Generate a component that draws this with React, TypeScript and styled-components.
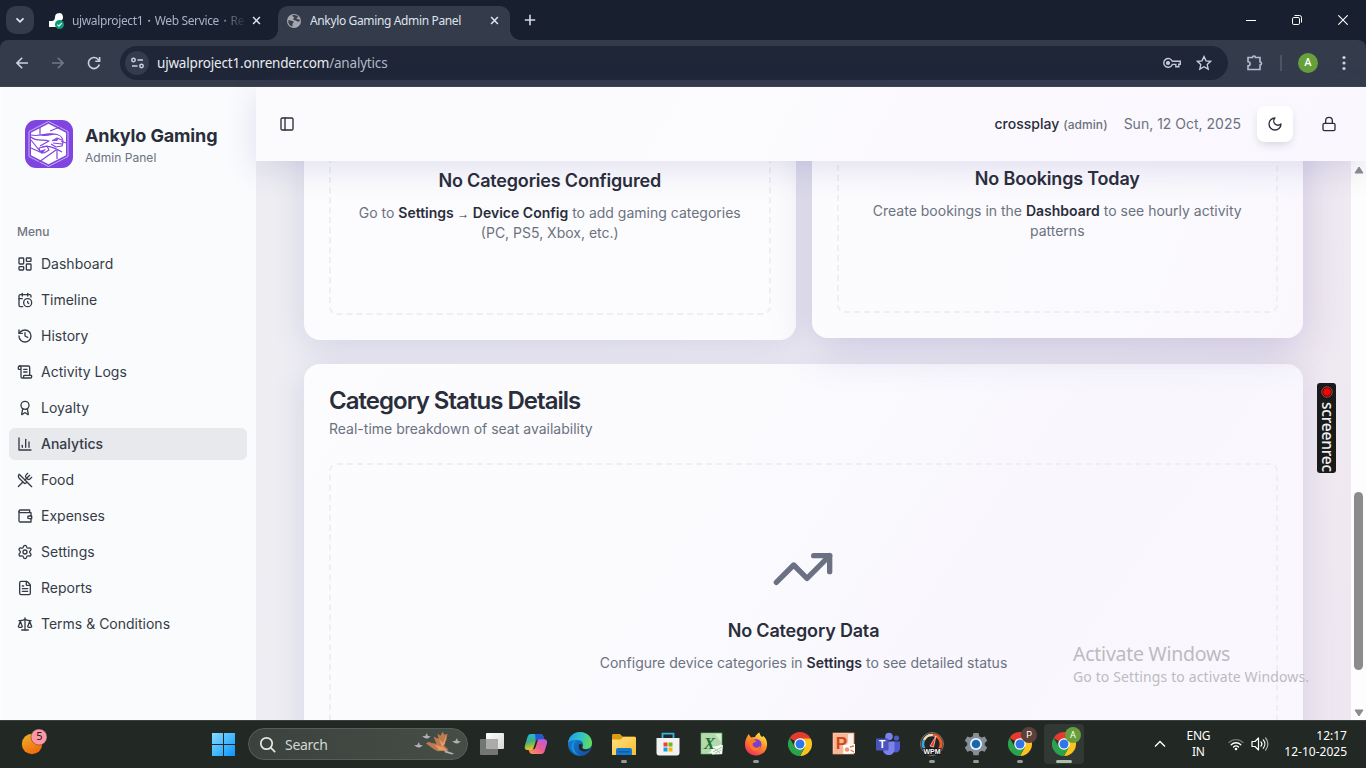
import React from 'react';
import styled, { createGlobalStyle, css } from 'styled-components';
import {
  Award,
  CalendarClock,
  FileText,
  History,
  LayoutDashboard,
  Lock,
  PanelLeft,
  Scale,
  ScrollText,
  Settings,
  TrendingUp,
  UtensilsCrossed,
} from 'lucide-react';

const ui = `'Inter', 'Liberation Sans', sans-serif`;
const system = `'Noto Sans', 'Open Sans', sans-serif`;

const GlobalStyle = createGlobalStyle`
  * { box-sizing: border-box; }
  body { margin: 0; overflow: hidden; background: #182030; }
  svg { display: block; flex: none; }
`;

const Screen = styled.div`
  position: relative;
  width: 1366px;
  height: 768px;
  display: flex;
  flex-direction: column;
  overflow: hidden;
  font-family: ${system};
`;

/* ---------- browser chrome ---------- */

const TabStrip = styled.div`
  height: 40px;
  flex: none;
  display: flex;
  align-items: flex-start;
  padding: 6px 0 0 6px;
  background: #182030;
  color: #d5d9e4;
`;

const TabSearch = styled.div`
  width: 28px;
  height: 28px;
  border-radius: 10px;
  background: #343b4b;
  display: flex;
  align-items: center;
  justify-content: center;
`;

const Tab = styled.div<{ $active?: boolean }>`
  position: relative;
  width: ${p => (p.$active ? 232 : 228)}px;
  height: 34px;
  margin-left: 8px;
  padding: 0 ${p => (p.$active ? 11 : 9)}px 5px ${p => (p.$active ? 8 : 6)}px;
  display: flex;
  align-items: center;
  gap: 8px;
  border-radius: 10px 10px 0 0;
  background: ${p => (p.$active ? '#343b4b' : 'transparent')};
  ${p =>
    p.$active &&
    css`
      &::before, &::after {
        content: '';
        position: absolute;
        bottom: 0;
        width: 10px;
        height: 10px;
      }
      &::before { left: -10px; background: radial-gradient(circle at 0 0, transparent 9.5px, #343b4b 10px); }
      &::after { right: -10px; background: radial-gradient(circle at 100% 0, transparent 9.5px, #343b4b 10px); }
    `}
`;

const TabTitle = styled.span<{ $fade?: boolean; $spacing: number }>`
  flex: 1;
  overflow: hidden;
  white-space: nowrap;
  font-size: 12px;
  line-height: 18px;
  letter-spacing: ${p => p.$spacing}px;
  color: ${p => (p.$fade ? '#aab1c3' : '#dfe3ec')};
  ${p => p.$fade && 'mask-image: linear-gradient(90deg, #000 84%, transparent 102%);'}
`;

const NewTab = styled.div`
  margin: 8px 0 0 14px;
`;

const WindowControls = styled.div`
  margin-left: auto;
  display: flex;
  height: 28px;
`;

const WindowButton = styled.div`
  width: 46px;
  display: flex;
  align-items: center;
  justify-content: center;
`;

const Toolbar = styled.div`
  height: 47px;
  flex: none;
  display: flex;
  align-items: center;
  background: #343b4b;
  border-radius: 8px 8px 0 0;
  border-bottom: 1px solid #3e4454;
  padding: 0 12px 1px 4px;
`;

const NavButton = styled.div`
  width: 36px;
  display: flex;
  justify-content: center;
`;

const Omnibox = styled.div`
  width: 1108px;
  height: 34px;
  margin-left: 8px;
  padding: 0 16px 0 5px;
  border-radius: 17px;
  background: #1e2637;
  display: flex;
  align-items: center;
`;

const SiteInfo = styled.div`
  width: 24px;
  height: 24px;
  border-radius: 50%;
  background: #343b4b;
  display: flex;
  align-items: center;
  justify-content: center;
`;

const Url = styled.div`
  flex: 1;
  margin-left: 8px;
  font-size: 13.5px;
  line-height: 20px;
  letter-spacing: -0.19px;
  color: #e8ebf2;
  span { color: #b2b8c6; }
`;

const OmniIcons = styled.div`
  display: flex;
  align-items: center;
  gap: 15px;
`;

const Extensions = styled.div`
  flex: 1;
  display: flex;
  align-items: center;
  padding-left: 18px;
`;

const Divider = styled.div`
  width: 2px;
  height: 16px;
  margin: 0 16px 0 16px;
  background: #4c5568;
`;

const Avatar = styled.div`
  width: 20px;
  height: 20px;
  border-radius: 50%;
  background: #67a03a;
  color: #fff;
  font: 500 11px/20px Roboto, ${system};
  text-align: center;
`;

const KebabSpace = styled.div`
  margin-left: 24px;
`;

/* ---------- application ---------- */

const Page = styled.div`
  flex: 1;
  min-height: 0;
  display: flex;
  background: #ededf3;
  font-family: ${ui};
  color: #2a2d3a;
`;

const Sidebar = styled.aside`
  width: 256px;
  flex: none;
  padding: 33px 9px 0;
  background: linear-gradient(90deg, #fdfdfe 0, #f9fbfd 2px);
`;

const Brand = styled.div`
  display: flex;
  align-items: center;
  gap: 12px;
  padding-left: 16px;
  height: 48px;
`;

const BrandText = styled.div`
  padding-top: 2px;
`;

const BrandName = styled.div`
  font-size: 18px;
  line-height: 24px;
  font-weight: 700;
  letter-spacing: -0.13px;
`;

const BrandSub = styled.div`
  font-size: 12px;
  line-height: 16px;
  margin-top: 2px;
  letter-spacing: 0.04px;
  color: #6b7280;
`;

const MenuLabel = styled.div`
  margin: 56px 0 8px 8px;
  font-size: 12px;
  font-weight: 500;
  line-height: 16px;
  color: #71757f;
`;

const Menu = styled.nav`
  display: flex;
  flex-direction: column;
  gap: 4px;
`;

const MenuItem = styled.div<{ $active?: boolean }>`
  height: 32px;
  padding: 0 8px;
  display: flex;
  align-items: center;
  gap: 8px;
  border-radius: 6px;
  font-size: 14px;
  line-height: 20px;
  color: #373b46;
  font-weight: ${p => (p.$active ? 500 : 400)};
  background: ${p => (p.$active ? '#e8e9ed' : 'transparent')};
`;

const Main = styled.main`
  flex: 1;
  min-width: 0;
  display: flex;
  flex-direction: column;
`;

const Header = styled.header`
  position: relative;
  z-index: 2;
  height: 74px;
  flex: none;
  display: flex;
  align-items: center;
  padding: 0 19px 0 23px;
  background: linear-gradient(120deg, #fbfbfe 0%, #fcfcfe 45%, #fbf8fe 60%, #faf8fe 100%);
  box-shadow: 0 8px 32px rgba(76, 66, 160, 0.15);
`;

const HeaderRight = styled.div`
  margin-left: auto;
  display: flex;
  align-items: center;
`;

const User = styled.div`
  font-size: 14px;
  line-height: 20px;
  font-weight: 500;
  span {
    margin-left: 4px;
    font-size: 12px;
    letter-spacing: 0.06px;
    color: #6b7280;
  }
`;

const Today = styled.div`
  margin: 0 16px;
  font-size: 14px;
  line-height: 20px;
  color: #6b7280;
`;

const IconButton = styled.div<{ $raised?: boolean }>`
  width: 36px;
  height: 36px;
  border-radius: 8px;
  display: flex;
  align-items: center;
  justify-content: center;
  ${p =>
    p.$raised &&
    css`
      margin-right: 18px;
      background: #fff;
      box-shadow: 0 4px 10px -2px rgba(30, 30, 60, 0.18);
    `}
`;

const Body = styled.div`
  flex: 1;
  min-height: 0;
  display: flex;
`;

const Viewport = styled.div`
  flex: 1;
  min-width: 0;
  padding: 0 48px;
  overflow: hidden;
  background: linear-gradient(115deg, #ededf2 0%, #efeef4 50%, #efe7f0 100%);
`;

const Content = styled.div`
  display: flex;
  flex-direction: column;
  gap: 24px;
  margin-top: -271px;
`;

const ChartRow = styled.div`
  display: grid;
  grid-template-columns: 1fr 1fr;
  gap: 16px;
`;

const Card = styled.section<{ $tall?: boolean; $lifted?: boolean }>`
  height: 450px;
  padding: 25px;
  display: flex;
  flex-direction: column;
  justify-content: ${p => (p.$tall ? 'flex-start' : 'flex-end')};
  border-radius: 16px;
  background: ${p =>
    p.$tall
      ? 'linear-gradient(125deg, #fcfcfe 0%, #fbfbfe 35%, #f9f7fd 62%, #faf8fe 100%)'
      : p.$lifted
        ? 'linear-gradient(110deg, #fcfcfe 10%, #faf8fd 100%)'
        : '#fcfcfe'};
  box-shadow: ${p => (p.$lifted ? '0 12px 40px rgba(76, 68, 160, 0.22)' : '0 8px 32px rgba(76, 68, 160, 0.15)')};
  ${p => p.$lifted && 'transform: translateY(-2px);'}
`;

const CardTitle = styled.h3`
  margin: 0;
  font-size: 24px;
  line-height: 24px;
  font-weight: 600;
  letter-spacing: -0.97px;
`;

const CardSub = styled.p`
  margin: 6px 0 24px;
  font-size: 14px;
  line-height: 20px;
  color: #6b7280;
`;

const Empty = styled.div<{ $height: number }>`
  height: ${p => p.$height}px;
  flex: none;
  padding: 0 16px;
  border: 2px dashed #edeff3;
  border-radius: 8px;
  display: flex;
  flex-direction: column;
  align-items: center;
  justify-content: center;
  text-align: center;
`;

const EmptyTitle = styled.h4`
  margin: 16px 0 8px;
  font-size: 18px;
  line-height: 28px;
  font-weight: 600;
  letter-spacing: -0.18px;
`;

const EmptyText = styled.p`
  margin: 0;
  max-width: 448px;
  font-size: 14px;
  line-height: 20px;
  color: #6b7280;
  strong { font-weight: 600; color: #2a2d3a; }
`;

const Arrow = styled.span`
  font: 400 12px/12px 'Liberation Sans', sans-serif;
`;

const IconSpace = styled.div`
  height: 64px;
  margin-right: 1px;
  color: #6b7183;
`;

const Scrollbar = styled.div`
  width: 15px;
  flex: none;
  background: #fdfdfd;
  display: flex;
  flex-direction: column;
  align-items: center;
  padding: 5px 0 3px;
`;

const Thumb = styled.div`
  width: 9px;
  height: 178px;
  margin: 318px 0 auto;
  border-radius: 5px;
  background: #8b8b8b;
`;

/* ---------- overlays ---------- */

const Recorder = styled.div`
  position: absolute;
  z-index: 3;
  left: 1317px;
  top: 383px;
  width: 19px;
  height: 90px;
  border-radius: 3px;
  background: #1a1a1a;
  display: flex;
  flex-direction: column;
  align-items: center;
  padding-top: 3px;
  color: #eee;
  span {
    writing-mode: vertical-rl;
    margin: 4px 0 0 2px;
    font-size: 15.5px;
    line-height: 17px;
    font-weight: 500;
    letter-spacing: -0.2px;
    white-space: nowrap;
  }
`;

const Watermark = styled.div`
  position: absolute;
  z-index: 3;
  left: 1073px;
  top: 641px;
  white-space: nowrap;
  color: #bcbbc0;
`;

const WatermarkTitle = styled.div`
  font-size: 19.5px;
  line-height: 26px;
  letter-spacing: -0.25px;
`;

const WatermarkText = styled.div`
  font-size: 14px;
  line-height: 19px;
  letter-spacing: 0.12px;
`;

/* ---------- taskbar ---------- */

const Taskbar = styled.div`
  height: 48px;
  flex: none;
  display: flex;
  align-items: center;
  padding-bottom: 1px;
  background: #222924;
  border-top: 1px solid #3b423d;
  color: #fff;
`;

const WidgetCell = styled.div`
  width: 212px;
  padding-left: 20px;
`;

const SearchBox = styled.div`
  width: 220px;
  height: 32px;
  margin: 0 2px 0 12px;
  padding: 0 5px 0 10px;
  border: 1px solid #565e58;
  border-radius: 16px;
  background: linear-gradient(90deg, #3c433e, #454d47);
  display: flex;
  align-items: center;
  font-size: 14px;
  letter-spacing: -0.3px;
  color: #d3d7d4;
  span { flex: 1; margin-left: 9px; }
`;

const AppCell = styled.div`
  position: relative;
  width: 44px;
  height: 46px;
  display: flex;
  align-items: center;
  justify-content: center;
`;

const ActivePlate = styled.div`
  width: 40px;
  height: 40px;
  border-radius: 4px;
  background: #323934;
  display: flex;
  align-items: center;
  justify-content: center;
`;

const Running = styled.i<{ $wide?: boolean }>`
  position: absolute;
  bottom: 4px;
  left: ${p => (p.$wide ? 14 : 19)}px;
  width: ${p => (p.$wide ? 16 : 6)}px;
  height: 3px;
  border-radius: 2px;
  background: ${p => (p.$wide ? '#a9bfb0' : '#969b97')};
`;

const ProfileBadge = styled.b<{ $tone: string }>`
  position: absolute;
  left: 23px;
  top: 6px;
  width: 16px;
  height: 16px;
  border-radius: 50%;
  background: ${p => p.$tone};
  font: 400 9px/16px Roboto, sans-serif;
  text-align: center;
`;

const Tray = styled.div`
  margin-left: auto;
  display: flex;
  align-items: center;
  padding-right: 19px;
  font-size: 12px;
  line-height: 16px;
`;

const Lang = styled.div`
  width: 40px;
  margin: 0 10px 0 12px;
  text-align: center;
  letter-spacing: -0.3px;
`;

const Volume = styled.div`
  margin-left: 7px;
`;

const Clock = styled.div`
  margin-left: 15px;
  text-align: right;
`;

/* ---------- drawings ---------- */

const Stroke = ({ children }: { children: React.ReactNode }) => (
  <svg width="16" height="16" viewBox="0 0 24 24" fill="none" stroke="currentColor" strokeWidth="2" strokeLinecap="round" strokeLinejoin="round">
    {children}
  </svg>
);

const BarsIcon = () => (
  <Stroke>
    <path d="M3 3v18h18" /><path d="M18 17V9" /><path d="M13 17V5" /><path d="M8 17v-3" />
  </Stroke>
);

const WalletIcon = () => (
  <Stroke>
    <path d="M21 12V7H5a2 2 0 0 1 0-4h14v4" /><path d="M3 5v14a2 2 0 0 0 2 2h16v-5" /><path d="M18 12a2 2 0 0 0 0 4h4v-4Z" />
  </Stroke>
);

const MoonIcon = () => (
  <Stroke><path d="M12 3a6 6 0 0 0 9 9 9 9 0 1 1-9-9Z" /></Stroke>
);

const CrossIcon = () => (
  <svg width="9" height="9" viewBox="0 0 10 10" stroke="#dfe3ec" strokeWidth="1.7"><path d="M1.2 1.2l7.6 7.6M8.800 1.200L1.200 8.800" /></svg>
);

const BrandLogo = () => (
  <svg width="48" height="48" viewBox="0 0 48 48">
    <rect width="48" height="48" rx="11" fill="#8045e0" />
    <path d="M23.500 1.500L43 11.500v25L23.500 46.500 4 36.500v-25z" fill="none" stroke="#c9b2f3" strokeWidth="1" />
    <path d="M23.500 3.700L41 12.800v22.500L23.500 44.300 6 35.300V12.800z" fill="#fff" />
    <g fill="none" stroke="#8045e0" strokeWidth="1.200" strokeLinejoin="round">
      <path d="M15 7v7M6 20l8 10M6 28l9 4M32 30v9M14 42l17-12M25 11l10-4M41 23l-5-2" />
      <path d="M6 15c8 2 13-2 22-1 6 0 10 3 10 8l-1 4-6 1-5-3" />
      <path d="M6 17c5 5 12 2 18 4l-9 5M17 27c6-2 12 0 20 5" />
      <path d="M14 28l8-2 2 4-5 3-4-1z" />
      <path d="M27 21l5-3 5 2M28 23l9 1" />
    </g>
    <path d="M12 14c7 2 14-2 20 0-7 1-12 4-20 0zM14 31l7-2-4 5zM27 21l7-3-2 3z" fill="#8045e0" />
  </svg>
);

const RenderLogo = () => (
  <svg width="16" height="16" viewBox="0 0 16 16">
    <path d="M7 4a4 4 0 1 1 5 4H9v6H1V8h3c2 0 3-2 3-4z" fill="#fff" />
    <circle cx="11.500" cy="11.500" r="4.500" fill="#0c9c77" />
    <path d="M9.400 11.700l1.500 1.500 2.800-3" stroke="#fff" strokeWidth="1.200" fill="none" />
  </svg>
);

const GlobeIcon = () => (
  <svg width="16" height="16" viewBox="0 0 16 16">
    <circle cx="8" cy="8" r="7" fill="#a5a8ae" />
    <path d="M2.200 7.400c1.500-.4 2.600.6 4.100.5 1.600 0 1.700 1.600.7 2.300-.9.700.1 1.800-.8 3.200-2.500-.5-4.200-3-4-6zM6.200 2.500c2.200-1 4.900-.2 6.300 1.600-.5.600-1.300.3-1.800 1-.4.800.6 1.300 1.500 1.200 1-.1 1.600.2 1.600 1.600-1 1-2.500.9-3.200.1-.9-1.100-3-.3-3.500-1.500-.4-1.100 1.300-1.200 1.100-2.100-.2-.8-1.800-.6-2-1.900z" fill="#3b4150" />
  </svg>
);

const ChromeLogo = () => (
  <svg width="24" height="24" viewBox="0 0 24 24">
    <path d="M12 12L1.600 6A12 12 0 0 1 22.400 6z" fill="#e33b2e" />
    <path d="M12 6.500h10.700A12 12 0 0 1 12 24l5-9z" fill="#fcc31e" />
    <path d="M1.600 6l5.400 9 5 .8L16.800 15 12 24A12 12 0 0 1 1.600 6z" fill="#2ba24c" />
    <circle cx="12" cy="12" r="5.800" fill="#fff" /><circle cx="12" cy="12" r="4.500" fill="#2f76e8" />
  </svg>
);

const Bird = ({ x, y }: { x: number; y: number }) => (
  <path transform={`translate(${x} ${y})`} d="M0 3.200l3.200-.2L5 0l.8 3 3 .2-2.800 2.300-2.800-.2z" fill="#b5adba" />
);

const SearchArt = () => (
  <svg width="48" height="26" viewBox="0 0 48 26">
    <Bird x={8} y={2} /><Bird x={0} y={11} /><Bird x={38} y={7} />
    <path d="M12 12.500l2.500-1.800 3 1.400 5 .7-3-7 5 2-1-5 3 2 2-4 2 3 3-1-1 6-3 5 5 5-4 1-7 .5-5-3-4-3z" fill="#bd7a50" />
    <path d="M25 8l4 4 3-8-1 9-3 3zM21 14l8 2 5 4-9-1z" fill="#e59a63" />
    <path d="M30 19l10 3.500-2 1-7-2z" fill="#b8acb5" />
  </svg>
);

const WeatherWidget = () => (
  <svg width="30" height="30" viewBox="0 0 30 30">
    <defs><linearGradient id="sun" x1="0" y1="0" x2=".6" y2="1"><stop stopColor="#f0b429" /><stop offset="1" stopColor="#f2690d" /></linearGradient></defs>
    <circle cx="12" cy="15" r="10.200" fill="url(#sun)" />
    <circle cx="19" cy="8" r="8" fill="#fb98a3" stroke="#222924" strokeWidth=".4" />
    <text x="19.500" y="11" fontSize="11" textAnchor="middle" fill="#30151a" fontFamily="Noto Sans">5</text>
  </svg>
);

const StartLogo = () => (
  <svg width="24" height="24" viewBox="0 0 24 24">
    <defs><linearGradient id="win" x1="0" y1="0" x2="1" y2="1"><stop stopColor="#84dcff" /><stop offset="1" stopColor="#0a95ff" /></linearGradient></defs>
    <path d="M0 1h11v11H0zM12 1h11v11H12zM0 13h11v11H0zM12 13h11v11H12z" fill="url(#win)" />
  </svg>
);

const TaskView = () => (
  <svg width="24" height="24" viewBox="0 0 24 24">
    <defs><linearGradient id="tv" x1="0" y1="0" x2="1" y2="1"><stop stopColor="#fff" /><stop offset="1" stopColor="#d7d7d7" /></linearGradient></defs>
    <rect x="6" y="1" width="18" height="16" rx="1" fill="url(#tv)" />
    <rect x="0" y="7" width="18" height="16" rx="1" fill="#747674" /><rect x="6" y="7" width="12" height="10" fill="#ababab" />
  </svg>
);

const Copilot = () => (
  <svg width="24" height="24" viewBox="0 0 24 24">
    <defs>
      <linearGradient id="cpa" x1="0" y1="0" x2=".3" y2="1"><stop stopColor="#1db7e8" /><stop offset=".5" stopColor="#41b17a" /><stop offset="1" stopColor="#f2c51d" /></linearGradient>
      <linearGradient id="cpb" x1="1" y1="0" x2="0" y2="1"><stop stopColor="#b05cf0" /><stop offset=".5" stopColor="#ee5b92" /><stop offset="1" stopColor="#ff9a50" /></linearGradient>
    </defs>
    <path d="M7 2h9c2 0 3 1 3.500 3l.8 2.500h-4C14 7.500 13 9 12.300 11l-1.500 4.500c-.6 1.700-1.500 2.500-3.500 2.500H3.800c-3 0-3.500-2-2.700-5L3.500 5c.6-2 1.500-3 3.500-3z" fill="url(#cpa)" />
    <path d="M11 2h5c2 0 3 1 3.500 3l.8 2.500h-4C14 7.500 13 9 12.300 11L12 12z" fill="#2456d8" />
    <path d="M17 22H8.500c-2 0-3-1-3.500-3l-.4-1H8c2 0 3-1.500 3.600-3.500L13 10c.6-2 1.500-2.800 3.500-2.800h3.200c3 0 4 2 3 5L20.700 19c-.6 2-1.700 3-3.700 3z" fill="url(#cpb)" />
    <path d="M12 8.500l1.800-.3-3 8.500-1.700.3z" fill="#222924" />
  </svg>
);

const Edge = () => (
  <svg width="24" height="24" viewBox="0 0 24 24">
    <defs>
      <linearGradient id="ega" x1="0" y1=".3" x2="1" y2=".5"><stop stopColor="#1e9fe8" /><stop offset=".5" stopColor="#2fc2c9" /><stop offset="1" stopColor="#67dc54" /></linearGradient>
      <linearGradient id="egb" x1="0" y1="0" x2="1" y2="1"><stop stopColor="#1684d8" /><stop offset="1" stopColor="#124c9e" /></linearGradient>
    </defs>
    <circle cx="12" cy="12" r="12" fill="url(#egb)" />
    <path d="M0 11C1 4 6 0 12 0c7 0 12 5 12 11 0 4-3 6-6.500 6-3 0-4-1.500-3-2.500 1.500-2 .5-6.500-5-6.500C5 8 1 9 0 11z" fill="url(#ega)" />
    <path d="M9 8.500C4 10 4 20 12 23.500 6 23 2 17 4 12c1-2.500 3-3.500 5-3.500z" fill="#1695df" />
    <path d="M14.500 14.500c-1 1.500.5 3 3 3 2 0 3.500-.5 4.800-1.300-1.300 2.300-3.500 3.300-6 3.300-4.500 0-7-4.500-4.800-7.500 2-.5 4 1 3 2.500z" fill="#222924" />
  </svg>
);

const Folder = () => (
  <svg width="24" height="24" viewBox="0 0 24 24">
    <path d="M0 3.500C0 2.500.6 2 1.500 2H8l2.500 2.500H22c1.200 0 2 .7 2 1.700V10H0z" fill="#dc9b12" />
    <defs><linearGradient id="fo" x1="0" y1="0" x2="1" y2="1"><stop stopColor="#ffe184" /><stop offset="1" stopColor="#f8bd2c" /></linearGradient></defs>
    <path d="M0 7.500h9L11 5h11.500c.9 0 1.500.5 1.500 1.500V23H0z" fill="url(#fo)" />
    <path d="M4 23v-5c0-1.200.8-2 2-2h12c1.200 0 2 .8 2 2v5z" fill="#1478cf" /><path d="M6 19h12v1.500H6z" fill="#0b5fae" />
  </svg>
);

const Store = () => (
  <svg width="24" height="24" viewBox="0 0 24 24">
    <path d="M6.500 7V1.700h11V7" fill="none" stroke="#35b3e8" strokeWidth="1.800" />
    <path d="M.5 6h23v15c0 1.500-1 2.500-2.500 2.500H3C1.500 23.500.5 22.500.5 21z" fill="#f2f2f2" />
    <path d="M7.500 10.500h4v4h-4z" fill="#e8452c" /><path d="M12.500 10.500h4v4h-4z" fill="#79b51c" />
    <path d="M7.500 15.500h4v4h-4z" fill="#1a9ce6" /><path d="M12.500 15.500h4v4h-4z" fill="#fbb60c" />
  </svg>
);

const Excel = () => (
  <svg width="24" height="24" viewBox="0 0 24 24">
    <rect x="1" y="1" width="21" height="21" fill="#e6f2e2" stroke="#4d9c55" strokeWidth=".8" />
    <path d="M2 2h19v10L8 21H2z" fill="#b4d9ab" /><path d="M15 2h6v8z" fill="#d9ecd3" />
    <path d="M11 15l12-2-1 9-10 .5z" fill="#f7fbf6" /><path d="M13 20l9-5M15 21.500l6-3.500M14 16l6 5" stroke="#93b98e" strokeWidth=".8" />
    <text x="9.500" y="16.500" fontSize="17" fontWeight="700" fontStyle="italic" textAnchor="middle" fill="#1c7332" fontFamily="Liberation Serif">X</text>
  </svg>
);

const Firefox = () => (
  <svg width="24" height="24" viewBox="0 0 24 24">
    <defs><linearGradient id="ff" x1=".8" y1="0" x2=".2" y2="1"><stop stopColor="#fff04a" /><stop offset=".4" stopColor="#ff9a26" /><stop offset="1" stopColor="#f2265a" /></linearGradient></defs>
    <path d="M3 5l1.500-3L7 5.500 11 5c1-2 2.500-3.500 4.500-4.500.2 2 1 3 2.500 4.500l1.500-1c2.500 2.500 4 5.500 3.500 9.500C22.500 19.500 18 23.500 12 23.500S1 19 1 13C1 10 1.500 7 3 5z" fill="url(#ff)" />
    <circle cx="12" cy="12.500" r="5.500" fill="#7a3ed0" />
    <path d="M5 9c3-3 6-1.500 7.500.5L9 11c-1 2 0 4 2.500 4.500 2 .5 4-.5 5-2 0 4-3 5.500-6 5C6 18 4 13 5 9z" fill="#ff7a22" />
  </svg>
);

const PowerPoint = () => (
  <svg width="24" height="24" viewBox="0 0 24 24">
    <rect x="1" y="1" width="21" height="21" fill="#fdf0e8" stroke="#e88a62" strokeWidth=".8" />
    <path d="M2 2h14v8l-6 12H2z" fill="#f6b896" />
    <text x="9.500" y="16.500" fontSize="17" fontWeight="700" textAnchor="middle" fill="#d04718" fontFamily="Liberation Sans">P</text>
    <path d="M11 13l12-1v9l-11 1z" fill="#fff" /><circle cx="15" cy="17.500" r="2.300" fill="#ee9870" /><path d="M18 15l4-1M18.500 18l3.500 2" stroke="#e57546" strokeWidth="1.400" />
  </svg>
);

const Teams = () => (
  <svg width="24" height="24" viewBox="0 0 24 24">
    <circle cx="13" cy="4.500" r="3.800" fill="#7b83eb" /><circle cx="20.500" cy="6" r="2.600" fill="#5059c9" />
    <path d="M16 9.500h8V16c0 3-2 4.500-4.500 4.500L16 19z" fill="#5059c9" />
    <path d="M7 9.500h11.500V17c0 4-2.500 6-6 6s-5.500-2.500-5.500-6z" fill="#7b83eb" />
    <rect x="0" y="6.500" width="12.500" height="12" rx="1" fill="#4b53bc" />
    <text x="6.250" y="16.200" fontSize="10.500" fontWeight="700" textAnchor="middle" fill="#fff" fontFamily="Liberation Sans">T</text>
  </svg>
);

const WpmGauge = () => (
  <svg width="24" height="24" viewBox="0 0 24 24">
    <circle cx="12" cy="12" r="11.500" fill="#242424" stroke="#777" />
    <path d="M4.500 17A9 9 0 0 1 4 8" fill="none" stroke="#41a6dd" strokeWidth="2.500" />
    <path d="M4 8a9 9 0 0 1 9-5" fill="none" stroke="#f1d8b0" strokeWidth="2.500" /><path d="M13 3a9 9 0 0 1 6.500 14" fill="none" stroke="#ef5b28" strokeWidth="3" />
    <path d="M10 14l6-10-2.500 11z" fill="#ff2a18" stroke="#fff" strokeWidth=".6" />
    <text x="12" y="22" fontSize="7.500" fontWeight="700" textAnchor="middle" fill="#fff" stroke="#111" strokeWidth="1.500" paintOrder="stroke" fontFamily="Liberation Sans" textLength="17" lengthAdjust="spacingAndGlyphs">WPM</text>
  </svg>
);

const SettingsGear = () => (
  <svg width="24" height="24" viewBox="0 0 24 24">
    <path d="M9.500 1h5l.8 3.200 2.200 1.200 3.200-1 2.500 4.300-2.400 2.200v2.400l2.400 2.200-2.500 4.300-3.200-1-2.200 1.200-.8 3.200h-5l-.8-3.200-2.200-1.200-3.200 1L.8 15.500l2.400-2.200v-2.400L.8 8.700l2.500-4.300 3.200 1 2.200-1.200z" fill="#858f9b" />
    <circle cx="12" cy="12" r="6" fill="#f1f3f5" /><circle cx="12" cy="12" r="4.300" fill="#1468b3" />
  </svg>
);

const menu: [string, React.ReactNode][] = [
  ['Dashboard', <LayoutDashboard size={16} />],
  ['Timeline', <CalendarClock size={16} />],
  ['History', <History size={16} />],
  ['Activity Logs', <ScrollText size={16} />],
  ['Loyalty', <Award size={16} />],
  ['Analytics', <BarsIcon />],
  ['Food', <UtensilsCrossed size={16} />],
  ['Expenses', <WalletIcon />],
  ['Settings', <Settings size={16} />],
  ['Reports', <FileText size={16} />],
  ['Terms & Conditions', <Scale size={16} />],
];

const pinned: { icon: React.ReactNode; running?: boolean }[] = [
  { icon: <TaskView /> },
  { icon: <Copilot /> },
  { icon: <Edge /> },
  { icon: <Folder />, running: true },
  { icon: <Store /> },
  { icon: <Excel /> },
  { icon: <Firefox />, running: true },
  { icon: <ChromeLogo /> },
  { icon: <PowerPoint /> },
  { icon: <Teams /> },
  { icon: <WpmGauge />, running: true },
  { icon: <SettingsGear />, running: true },
];

function BrowserChrome() {
  return (
    <>
      <TabStrip>
        <TabSearch>
          <svg width="10" height="10" viewBox="0 0 10 10" fill="none" stroke="#e3e6ee" strokeWidth="1.700"><path d="M1.500 3.300L5 6.800l3.500-3.500" /></svg>
        </TabSearch>
        <Tab>
          <RenderLogo />
          <TabTitle $fade $spacing={-0.37}>ujwalproject1・Web Service・Render</TabTitle>
          <CrossIcon />
        </Tab>
        <Tab $active>
          <GlobeIcon />
          <TabTitle $spacing={-0.36}>Ankylo Gaming Admin Panel</TabTitle>
          <CrossIcon />
        </Tab>
        <NewTab>
          <svg width="12" height="12" viewBox="0 0 12 12" stroke="#d5d9e4" strokeWidth="1.600"><path d="M6 .8v10.400M.8 6h10.400" /></svg>
        </NewTab>
        <WindowControls>
          <WindowButton><svg width="10" height="10" viewBox="0 0 10 10" stroke="#fff"><path d="M0 5.500h10" /></svg></WindowButton>
          <WindowButton><svg width="10" height="10" viewBox="0 0 10 10" fill="none" stroke="#fff"><rect x=".5" y="2.500" width="7" height="7" rx="1.300" /><path d="M2.500.5h5a2 2 0 0 1 2 2v5" /></svg></WindowButton>
          <WindowButton><svg width="10" height="10" viewBox="0 0 10 10" stroke="#fff" strokeWidth="1.100"><path d="M.3.3l9.400 9.400M9.700.3L.3 9.700" /></svg></WindowButton>
        </WindowControls>
      </TabStrip>
      <Toolbar>
        <NavButton><svg width="12" height="12" viewBox="0 0 12 12" fill="none" stroke="#cbd1df" strokeWidth="1.600"><path d="M12 6H1.200M6.200.8L1 6l5.200 5.200" /></svg></NavButton>
        <NavButton><svg width="12" height="12" viewBox="0 0 12 12" fill="none" stroke="#717887" strokeWidth="1.600"><path d="M0 6h10.800M5.800.8L11 6l-5.200 5.200" /></svg></NavButton>
        <NavButton><svg width="14" height="14" viewBox="0 0 14 14" fill="none" stroke="#cbd1df" strokeWidth="1.600"><path d="M12.300 8.500A5.500 5.500 0 1 1 11 3.300l1.500 1.600" /><path d="M12.600 1v4.200H8.300" /></svg></NavButton>
        <Omnibox>
          <SiteInfo>
            <svg width="13" height="12" viewBox="0 0 13 12" fill="none" stroke="#cbd1df" strokeWidth="1.500"><circle cx="2.500" cy="3" r="1.700" /><path d="M6.500 3H12M1 9h5.500" /><circle cx="10.500" cy="9" r="1.700" /></svg>
          </SiteInfo>
          <Url>ujwalproject1.onrender.com<span>/analytics</span></Url>
          <OmniIcons>
            <svg width="18" height="12" viewBox="0 0 18 12" fill="none" stroke="#c5cad6" strokeWidth="1.400"><path d="M9.300 4.300h8v3h-1.500v2.400h-3V7.400H9.300a4.400 4.400 0 1 1 0-3z" /><circle cx="5" cy="6" r="1.400" fill="#c5cad6" /></svg>
            <svg width="16" height="16" viewBox="0 0 16 16" fill="none" stroke="#cbd1df" strokeWidth="1.300"><path d="M8 1.500l2 4.300 4.700.5-3.500 3.200 1 4.600L8 11.700l-4.200 2.400 1-4.600L1.300 6.300 6 5.800z" /></svg>
          </OmniIcons>
        </Omnibox>
        <Extensions>
          <svg width="18" height="18" viewBox="0 0 18 18" fill="none" stroke="#b5bdd3" strokeWidth="1.600"><path d="M2 3.500h4.500a1.500 1.500 0 0 1 3 0H14V8a1.500 1.500 0 0 1 0 3v4.500H2v-3.700a2 2 0 0 0 0-4.100z" /></svg>
          <Divider />
          <Avatar>A</Avatar>
          <KebabSpace>
            <svg width="4" height="16" viewBox="0 0 4 16" fill="#cbd1df"><circle cx="2" cy="2.500" r="1.600" /><circle cx="2" cy="8" r="1.600" /><circle cx="2" cy="13.500" r="1.600" /></svg>
          </KebabSpace>
        </Extensions>
      </Toolbar>
    </>
  );
}

export default function App() {
  return (
    <Screen>
      <GlobalStyle />
      <BrowserChrome />
      <Page>
        <Sidebar>
          <Brand>
            <BrandLogo />
            <BrandText>
              <BrandName>Ankylo Gaming</BrandName>
              <BrandSub>Admin Panel</BrandSub>
            </BrandText>
          </Brand>
          <MenuLabel>Menu</MenuLabel>
          <Menu>
            {menu.map(([label, icon]) => (
              <MenuItem key={label} $active={label === 'Analytics'}>{icon}{label}</MenuItem>
            ))}
          </Menu>
        </Sidebar>
        <Main>
          <Header>
            <PanelLeft size={16} />
            <HeaderRight>
              <User>crossplay<span>(admin)</span></User>
              <Today>Sun, 12 Oct, 2025</Today>
              <IconButton $raised><MoonIcon /></IconButton>
              <IconButton><Lock size={16} /></IconButton>
            </HeaderRight>
          </Header>
          <Body>
            <Viewport>
              <Content>
                <ChartRow>
                  <Card>
                    <Empty $height={300}>
                      <IconSpace />
                      <EmptyTitle>No Categories Configured</EmptyTitle>
                      <EmptyText>Go to <strong>Settings <Arrow>→</Arrow> Device Config</strong> to add gaming categories (PC, PS5, Xbox, etc.)</EmptyText>
                    </Empty>
                  </Card>
                  <Card $lifted>
                    <Empty $height={300}>
                      <IconSpace />
                      <EmptyTitle>No Bookings Today</EmptyTitle>
                      <EmptyText>Create bookings in the <strong>Dashboard</strong> to see hourly activity patterns</EmptyText>
                    </Empty>
                  </Card>
                </ChartRow>
                <Card $tall>
                  <CardTitle>Category Status Details</CardTitle>
                  <CardSub>Real-time breakdown of seat availability</CardSub>
                  <Empty $height={284}>
                    <IconSpace><TrendingUp size={64} strokeWidth={2} /></IconSpace>
                    <EmptyTitle>No Category Data</EmptyTitle>
                    <EmptyText>Configure device categories in <strong>Settings</strong> to see detailed status</EmptyText>
                  </Empty>
                </Card>
              </Content>
            </Viewport>
            <Scrollbar>
              <svg width="10" height="8" viewBox="0 0 10 8"><path d="M5 1l4 6H1z" fill="#8b8b8b" stroke="#8b8b8b" strokeLinejoin="round" /></svg>
              <Thumb />
              <svg width="10" height="8" viewBox="0 0 10 8"><path d="M5 7l4-6H1z" fill="#8b8b8b" stroke="#8b8b8b" strokeLinejoin="round" /></svg>
            </Scrollbar>
          </Body>
        </Main>
      </Page>
      <Recorder>
        <svg width="12" height="12" viewBox="0 0 12 12"><circle cx="6" cy="6" r="5.200" fill="none" stroke="#e34848" strokeWidth=".8" /><circle cx="6" cy="6" r="3.800" fill="#f00" /></svg>
        <span>screenrec</span>
      </Recorder>
      <Watermark>
        <WatermarkTitle>Activate Windows</WatermarkTitle>
        <WatermarkText>Go to Settings to activate Windows.</WatermarkText>
      </Watermark>
      <Taskbar>
        <WidgetCell><WeatherWidget /></WidgetCell>
        <StartLogo />
        <SearchBox>
          <svg width="17" height="17" viewBox="0 0 17 17" fill="none" stroke="#e4e7e5" strokeWidth="1.700"><circle cx="7.500" cy="7.500" r="5.700" /><path d="M11.700 11.700l4 4" strokeLinecap="round" /></svg>
          <span>Search</span>
          <SearchArt />
        </SearchBox>
        {pinned.map((app, i) => (
          <AppCell key={i}>{app.icon}{app.running && <Running />}</AppCell>
        ))}
        <AppCell><ChromeLogo /><ProfileBadge $tone="#5d4039">P</ProfileBadge><Running /></AppCell>
        <AppCell><ActivePlate><ChromeLogo /></ActivePlate><ProfileBadge $tone="#67a03a">A</ProfileBadge><Running $wide /></AppCell>
        <Tray>
          <svg width="12" height="8" viewBox="0 0 12 8" fill="none" stroke="#fff" strokeWidth="1.400"><path d="M1 6.500l5-5 5 5" /></svg>
          <Lang>ENG<br />IN</Lang>
          <svg width="16" height="14" viewBox="0 0 16 14" fill="none" strokeWidth="1.300" strokeLinecap="round">
            <path d="M1 5.500a9.800 9.800 0 0 1 14 0" stroke="#6e7570" /><path d="M3.200 7.800a6.700 6.700 0 0 1 9.600 0M5.500 10a3.500 3.500 0 0 1 5 0" stroke="#fff" /><circle cx="8" cy="12" r="1.300" fill="#fff" />
          </svg>
          <Volume>
            <svg width="18" height="16" viewBox="0 0 18 16" fill="none" stroke="#fff" strokeWidth="1.200" strokeLinecap="round" strokeLinejoin="round">
              <path d="M1 5.500h3L7.500 2v12L4 10.500H1z" /><path d="M10 5.800a3.500 3.500 0 0 1 0 4.400M12.300 3.800a6.500 6.500 0 0 1 0 8.400" /><path d="M14.600 2a9 9 0 0 1 0 12" stroke="#aeb2af" />
            </svg>
          </Volume>
          <Clock>12:17<br />12-10-2025</Clock>
        </Tray>
      </Taskbar>
    </Screen>
  );
}
